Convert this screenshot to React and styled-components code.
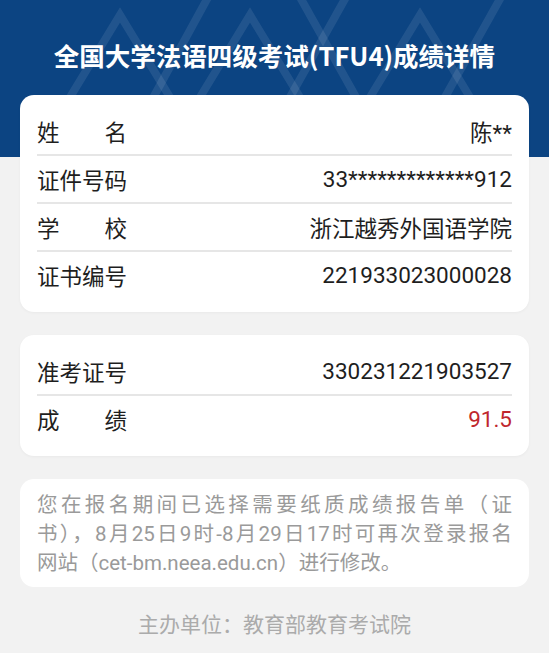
import React from "react";
import styled, { createGlobalStyle } from "styled-components";

const GlobalStyle = createGlobalStyle`
  html, body {
    margin: 0;
    padding: 0;
    background: #f2f2f2;
  }
  body {
    font-family: Roboto, "Noto Sans CJK SC", "Noto Sans", sans-serif;
  }
`;

const Page = styled.div`
  width: 549px;
  min-height: 653px;
  background: #f2f2f2;
  overflow: hidden;
`;

const Header = styled.header`
  position: relative;
  height: 157px;
  background: #0c4482;
  overflow: hidden;
`;

const Pattern = styled.svg`
  position: absolute;
  inset: 0;
  width: 100%;
  height: 100%;
`;

const Title = styled.h1`
  position: relative;
  margin: 0;
  padding-top: 38px;
  text-align: center;
  color: #ffffff;
  font-family: "Noto Sans CJK SC", "Noto Sans", sans-serif;
  font-size: 25.5px;
  line-height: 34px;
  font-weight: 700;
`;

const Content = styled.main`
  display: flex;
  flex-direction: column;
  gap: 23px;
  margin-top: -62px;
  padding: 0 20px;
  position: relative;
`;

const Card = styled.section`
  background: #ffffff;
  border-radius: 14px;
  padding: 13px 17px 14px;
  box-shadow: 0 1px 3px rgba(0, 0, 0, 0.04);
`;

const Row = styled.div`
  display: flex;
  align-items: center;
  justify-content: space-between;
  height: 46px;
  font-size: 22.5px;
  color: #1e1e1e;

  & + & {
    border-top: 2px solid #e6e6e6;
  }
`;

const Label = styled.span`
  width: 4em;
  text-align: justify;
  text-align-last: justify;
`;

const Value = styled.span`
  color: ${(p) => (p.$highlight ? "#c0272d" : "#1e1e1e")};
`;

const Note = styled.section`
  background: #ffffff;
  border-radius: 14px;
  padding: 12px 17px 9px;
  color: #9a9a9a;
  font-size: 20.5px;
  line-height: 29px;
`;

const NoteLine = styled.div`
  white-space: nowrap;
  text-align: ${(p) => (p.$justify ? "justify" : "left")};
  text-align-last: ${(p) => (p.$justify ? "justify" : "left")};
`;

const Footer = styled.footer`
  margin-top: 23px;
  text-align: center;
  color: #ababab;
  font-size: 21px;
  line-height: 30px;
`;

const basic = [
  ["姓名", "陈**"],
  ["证件号码", "33*************912"],
  ["学校", "浙江越秀外国语学院"],
  ["证书编号", "221933023000028"],
];

const HeaderPattern = () => (
  <Pattern viewBox="0 0 549 157" preserveAspectRatio="none">
    <g stroke="rgba(255,255,255,0.09)" strokeWidth="8" fill="none" strokeLinejoin="miter">
      <path d="M44 140 L120 15 L196 140" />
      <path d="M212 -10 L130 140" />
      <path d="M174 140 L250 15 L326 140" />
      <path d="M296 -10 L380 140" />
      <path d="M350 -10 L266 140" />
      <path d="M344 140 L420 15 L496 140" />
      <path d="M505 -10 L421 140" />
    </g>
  </Pattern>
);

export default function App() {
  return (
    <Page>
      <GlobalStyle />
      <Header>
        <HeaderPattern />
        <Title>全国大学法语四级考试(TFU4)成绩详情</Title>
      </Header>
      <Content>
        <Card>
          {basic.map(([label, value]) => (
            <Row key={label}>
              <Label>{label}</Label>
              <Value>{value}</Value>
            </Row>
          ))}
        </Card>
        <Card>
          <Row>
            <Label>准考证号</Label>
            <Value>330231221903527</Value>
          </Row>
          <Row>
            <Label>成绩</Label>
            <Value $highlight>91.5</Value>
          </Row>
        </Card>
        <Note>
          <NoteLine $justify>您在报名期间已选择需要纸质成绩报告单（证</NoteLine>
          <NoteLine $justify>书），8月25日9时-8月29日17时可再次登录报名</NoteLine>
          <NoteLine>网站（cet-bm.neea.edu.cn）进行修改。</NoteLine>
        </Note>
      </Content>
      <Footer>主办单位：教育部教育考试院</Footer>
    </Page>
  );
}
